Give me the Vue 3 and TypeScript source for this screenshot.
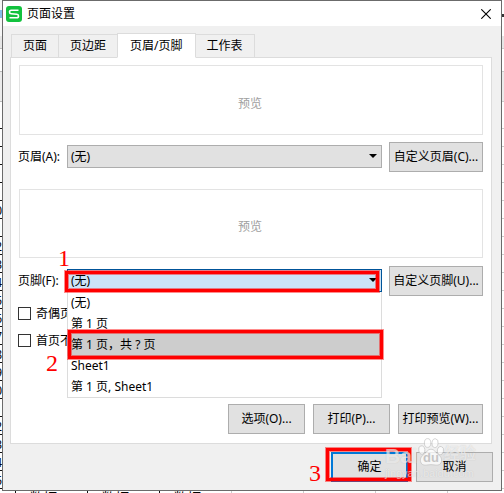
<script setup lang="ts">
import { ref } from 'vue'

const tabs: string[] = ['页面', '页边距', '页眉/页脚', '工作表']
const activeTab = ref<number>(2)

const options: string[] = ['(无)', '第 1 页', '第 1 页，共 ? 页', 'Sheet1', '第 1 页, Sheet1']
const highlighted = ref<number>(2)
const header = ref<string>(options[0])
const footer = ref<string>(options[0])
const oddEven = ref<boolean>(false)
const firstPage = ref<boolean>(false)

const rowNumbers: number[] = Array.from({ length: 16 }, (_, i) => i + 10)
const cells: string[] = ['数据', '数据', '数据', '', '', '', '']
</script>

<template>
  <div class="desktop">
    <div class="rows-left" aria-hidden="true">
      <span v-for="n in rowNumbers" :key="n">{{ n }}</span>
    </div>

    <main class="dialog">
      <header class="titlebar">
        <svg class="logo" viewBox="0 0 16 16" aria-hidden="true">
          <rect width="16" height="16" rx="3" fill="#12c23e" />
          <path d="M12.5 4.2H5.2Q3.5 4.2 3.5 5.9Q3.5 7.6 5.2 7.7L10.8 8.2Q12.5 8.4 12.5 10Q12.5 11.8 10.8 11.8H3.5" fill="none" stroke="#fff" stroke-width="1.6" />
        </svg>
        <h1>页面设置</h1>
        <button class="close" type="button" aria-label="关闭">
          <svg viewBox="0 0 10 10" aria-hidden="true"><path d="M0.3 0.3L9.7 9.7M9.7 0.3L0.3 9.7" stroke="#000" stroke-width="1.1" /></svg>
        </button>
      </header>

      <nav class="tabs" role="tablist">
        <button
          v-for="(t, i) in tabs"
          :key="t"
          type="button"
          role="tab"
          class="tab"
          :class="{ active: i === activeTab }"
          :aria-selected="i === activeTab"
          @click="activeTab = i"
        >{{ t }}</button>
      </nav>

      <section class="panel">
        <div class="preview first">预览</div>
        <div class="row">
          <label for="header">页眉(A):</label>
          <div class="combo">
            <select id="header" v-model="header">
              <option v-for="o in options" :key="o">{{ o }}</option>
            </select>
            <svg class="arrow" viewBox="0 0 8 4" aria-hidden="true"><path d="M0 0H8L4 4Z" /></svg>
          </div>
          <button type="button" class="btn">自定义页眉(C)...</button>
        </div>

        <div class="preview second">预览</div>
        <div class="row lower">
          <label for="footer">页脚(F):</label>
          <div class="combo open">
            <select id="footer" v-model="footer">
              <option v-for="o in options" :key="o">{{ o }}</option>
            </select>
            <svg class="arrow" viewBox="0 0 8 4" aria-hidden="true"><path d="M0 0H8L4 4Z" /></svg>
            <ul class="list" role="listbox">
              <li
                v-for="(o, i) in options"
                :key="o"
                role="option"
                :class="{ hot: i === highlighted }"
                :aria-selected="i === highlighted"
              >{{ o }}<template v-if="i === highlighted"><span class="mark mark-item"></span><span class="step step-two">2</span></template></li>
            </ul>
            <span class="mark mark-combo"></span>
            <span class="step step-one">1</span>
          </div>
          <button type="button" class="btn">自定义页脚(U)...</button>
        </div>

        <div class="checks">
          <label><input v-model="oddEven" type="checkbox" />奇偶页不同</label>
          <label><input v-model="firstPage" type="checkbox" />首页不同</label>
        </div>

        <div class="actions">
          <button type="button" class="btn">选项(O)...</button>
          <button type="button" class="btn">打印(P)...</button>
          <button type="button" class="btn wide">打印预览(W)...</button>
        </div>
      </section>

      <footer class="footer">
        <div class="confirm">
          <button type="button" class="btn primary">确定</button>
          <span class="mark mark-ok"></span>
          <span class="step step-three">3</span>
        </div>
        <button type="button" class="btn">取消</button>
        <div class="watermark">
          <div class="brand">
            <span>Bai</span>
            <svg viewBox="0 0 26 28" aria-hidden="true">
              <g fill="#fff" stroke="#bcbcbc" stroke-width="0.8">
                <ellipse cx="3.8" cy="12" rx="3.1" ry="4.2" transform="rotate(-12 3.8 12)" />
                <ellipse cx="9.6" cy="5" rx="3.2" ry="4.4" />
                <ellipse cx="17" cy="5.2" rx="3.1" ry="4.4" transform="rotate(8 17 5.2)" />
                <ellipse cx="22.4" cy="12.6" rx="3.1" ry="4.1" transform="rotate(14 22.4 12.6)" />
                <path d="M13 11.2C9.6 11.2 8.7 14.2 6.2 16.2C3.8 18 1.8 20 2.6 23.6C3.4 27.5 7.3 27.4 10 26.9Q13 26.4 16 26.9C18.7 27.4 22.6 27.5 23.4 23.6C24.2 20 22.2 18 19.8 16.2C17.3 14.2 16.4 11.2 13 11.2Z" />
              </g>
              <text x="13" y="24" text-anchor="middle">du</text>
            </svg>
            <span class="cn">经验</span>
          </div>
          <div class="site">jingyan.baidu.com</div>
        </div>
      </footer>
    </main>

    <div class="rows-right" aria-hidden="true"></div>
    <div class="sheet-bottom" aria-hidden="true">
      <span v-for="(c, i) in cells" :key="i" :class="{ dark: i < 3 }">{{ c }}</span>
    </div>
  </div>
</template>

<style>
body {
  margin: 0;
  background: #fff;
}
</style>

<style scoped>
* {
  box-sizing: border-box;
}

.desktop {
  display: grid;
  grid-template-columns: 2px minmax(0, 1fr) 2px;
  grid-template-rows: 1fr 2px;
  min-height: 100vh;
  font: 12px/16px "Noto Sans", "Noto Sans CJK SC", sans-serif;
  color: #000;
}

.rows-left,
.rows-right {
  overflow: hidden;
  background:
    linear-gradient(#f6f6f6 0 10px, #87bce9 10px 18px, #f6f6f6 18px 36px, #e6e6e6 36px 48px, #bbb 48px 49px, #fff 49px 71px, #bbb 71px 72px, #ebebeb 72px 101px, #bbb 101px 102px, #fff 102px 128px) no-repeat 0 0 / 100% 128px,
    repeating-linear-gradient(#111 0 1px, #fff 1px 18px) 0 128px / 100% 18px;
}

.rows-left {
  display: flex;
  flex-direction: column;
  align-items: flex-end;
  padding-top: 202px;
  height: 0;
  min-height: 100%;
}

.rows-left span {
  flex: none;
  height: 18px;
  line-height: 18px;
}

.rows-right {
  background:
    linear-gradient(#fff 0 14px, #333 14px 17px, #fff 17px 36px, #e6e6e6 36px 48px, #ccc 48px 49px, #fff 49px 71px, #ccc 71px 72px, #ebebeb 72px 101px, #ccc 101px 102px, #fff 102px 128px) no-repeat 0 0 / 100% 128px,
    repeating-linear-gradient(#ccc 0 1px, #fff 1px 18px) 0 128px / 100% 18px;
}

.sheet-bottom {
  grid-column: 1 / -1;
  display: flex;
  height: 2px;
  padding-left: 15px;
  overflow: hidden;
}

.sheet-bottom span {
  flex: none;
  width: 72px;
  border-left: 1px solid #ccc;
  text-align: center;
}

.sheet-bottom .dark {
  padding-right: 16px;
  border-color: #111;
  font-size: 14px;
  line-height: 14px;
}

.dialog {
  display: flex;
  flex-direction: column;
  border: 1px solid #6b6b6b;
  background: #f0f0f0;
}

.titlebar {
  display: flex;
  align-items: center;
  height: 25px;
  padding: 0 10px 0 3px;
  background: #fff;
}

.logo {
  width: 16px;
  height: 16px;
}

h1 {
  flex: 1;
  margin: 0 0 0 5px;
  font-size: 12px;
  font-weight: 400;
}

button {
  font: inherit;
  color: inherit;
}

.close {
  display: flex;
  padding: 0;
  border: 0;
  background: none;
}

.close svg {
  width: 10px;
  height: 10px;
}

.tabs {
  display: flex;
  align-items: flex-end;
  height: 32px;
  padding-left: 8px;
  margin-bottom: -1px;
}

.tab {
  height: 24px;
  margin-right: -1px;
  padding: 0 11px;
  border: 1px solid #dcdcdc;
  background: #f0f0f0;
}

.tab.active {
  position: relative;
  height: 25px;
  padding: 0 12px;
  border-bottom-color: #fff;
  background: #fff;
}

.panel {
  margin: 0 9px 0 7px;
  padding: 7px 8px 9px 7px;
  border: 1px solid #dcdcdc;
  background: #fff;
}

.preview {
  display: flex;
  align-items: center;
  justify-content: center;
  height: 70px;
  margin-left: 1px;
  padding: 7px 2px 0 0;
  border: 1px solid #e3e3e3;
  color: #a0a0a0;
}

.preview.second {
  margin-top: 17px;
  height: 69px;
}

.row {
  display: grid;
  grid-template-columns: 49px minmax(0, 1fr) 94px;
  align-items: start;
  margin-top: 7px;
}

.row.lower {
  margin-top: 8px;
}

.row label {
  line-height: 30px;
  white-space: nowrap;
}

.combo {
  position: relative;
  margin: 3px 7px 0 0;
}

.combo select {
  display: block;
  width: 100%;
  height: 23px;
  padding: 0 20px 0 3px;
  border: 1px solid #adadad;
  border-radius: 0;
  outline: 0;
  background: #e1e1e1;
  appearance: none;
  font: inherit;
  color: #000;
}

.combo.open select {
  border-color: #005499;
  background: #cce4f7;
}

.arrow {
  position: absolute;
  top: 9px;
  right: 5px;
  width: 8px;
  height: 4px;
}

.list {
  position: absolute;
  z-index: 1;
  top: 23px;
  left: 0;
  right: 0;
  margin: 0;
  padding: 0;
  list-style: none;
  border: solid #dcdcdc;
  border-width: 0 1px 1px;
  background: #fff;
}

.list li {
  position: relative;
  height: 21px;
  padding-left: 3px;
  line-height: 21px;
}

.list .hot {
  background: #cdcdcd;
  box-shadow: 0 0 0 1px #cdcdcd;
}

.mark {
  position: absolute;
  z-index: 2;
  border: 3px solid #f00;
  box-shadow: 0 0 0 1px rgba(255, 0, 0, 0.45), inset 0 0 0 1px rgba(255, 0, 0, 0.45);
  pointer-events: none;
}

.mark-combo {
  inset: 2px 3px 0 -2px;
}

.mark-item {
  inset: -4px -2px -4px 0;
}

.mark-ok {
  inset: -4px -3px 1px -5px;
}

.step {
  position: absolute;
  z-index: 2;
  font: 24px/24px "Liberation Serif", serif;
  color: #f00;
}

.step-one {
  top: -23px;
  left: -9px;
}

.step-two {
  top: 17px;
  left: -22px;
}

.step-three {
  top: 9px;
  left: -22px;
}

.btn {
  height: 30px;
  padding: 0;
  border: 1px solid #adadad;
  background: #e1e1e1;
  white-space: nowrap;
}

.checks {
  display: flex;
  flex-direction: column;
  gap: 14px;
  margin-top: 11px;
}

.checks label {
  display: flex;
  align-items: center;
  gap: 5px;
  height: 13px;
}

.checks input {
  width: 13px;
  height: 13px;
  margin: 0;
  border: 1px solid #333;
  background: #fff;
  appearance: none;
}

.actions {
  display: flex;
  justify-content: flex-end;
  gap: 8px;
  margin-top: 57px;
}

.actions .btn {
  width: 77px;
}

.actions .wide {
  width: 85px;
}

.footer {
  position: relative;
  display: flex;
  justify-content: flex-end;
  gap: 8px;
  padding: 8px 8px 8px 0;
}

.footer .btn {
  width: 77px;
}

.confirm {
  position: relative;
  display: flex;
}

.footer .primary {
  border: 2px solid #0078d7;
}

.watermark {
  position: absolute;
  z-index: 3;
  top: -6px;
  right: 26px;
  width: 90px;
  color: rgba(255, 255, 255, 0.6);
  text-shadow: 0 0 1px rgba(110, 110, 110, 0.3);
  pointer-events: none;
}

.brand {
  display: flex;
  align-items: flex-end;
  height: 28px;
  font: 700 21px/20px "Liberation Sans", "Noto Sans CJK SC", sans-serif;
}

.brand svg {
  flex: none;
  width: 26px;
  height: 28px;
  opacity: 0.75;
}

.brand text {
  font: 700 13px "Liberation Sans", sans-serif;
  fill: #bcbcbc;
  text-shadow: none;
}

.brand .cn {
  font-size: 16px;
  line-height: 24px;
  white-space: nowrap;
}

.site {
  font: 11px/14px "Liberation Sans", sans-serif;
}
</style>
